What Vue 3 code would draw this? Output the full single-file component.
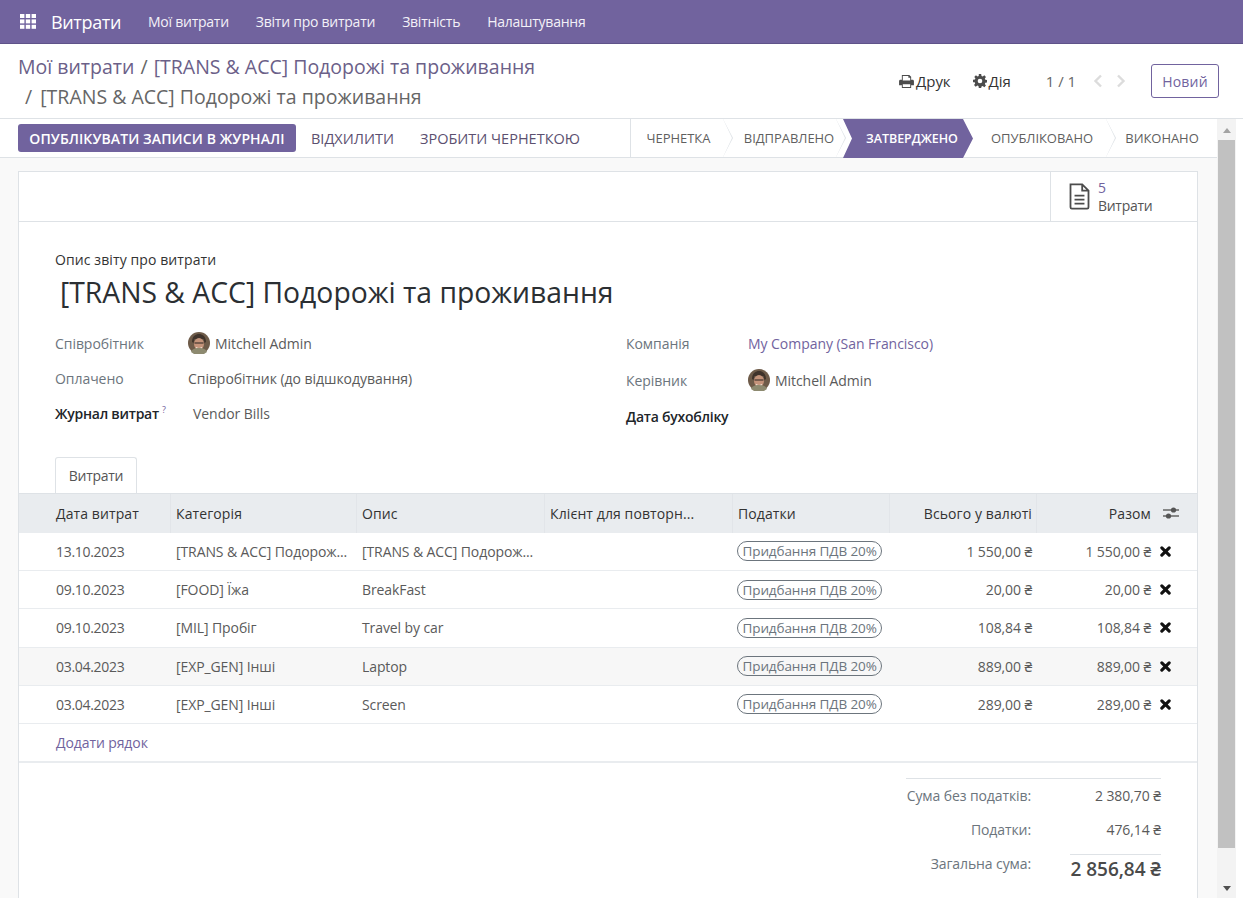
<template>
  <div class="app">
    <header class="navbar">
      <svg class="apps" viewBox="0 0 16 15" width="16" height="15">
        <g fill="#fff">
          <rect v-for="c in appCells" :key="c.k" :x="c.x" :y="c.y" width="4.4" height="4" />
        </g>
      </svg>
      <span class="brand">Витрати</span>
      <a v-for="m in menus" :key="m" class="menu">{{ m }}</a>
    </header>

    <div class="top">
      <div class="crumbs">
        <div class="crumb">Мої витрати <span class="sep">/</span> [TRANS &amp; ACC] Подорожі та проживання</div>
        <div class="crumb sub"><span class="sep">/</span> [TRANS &amp; ACC] Подорожі та проживання</div>
      </div>
      <div class="actions">
        <span class="act">
          <svg viewBox="0 0 16 14" width="15" height="13"><path fill="#4c4c4c" d="M3 0h8l2 2v3h1.500c.8 0 1.500.7 1.500 1.500V11h-3v3H3v-3H0V6.500C0 5.700.7 5 1.500 5H3zm1 1v5h8V3h-2V1zm0 9v3h8v-3z" fill-rule="evenodd"/></svg>Друк
        </span>
        <span class="act act2">
          <svg viewBox="0 0 24 24" width="14" height="14"><path fill="#4c4c4c" fill-rule="evenodd" d="M10 0h4l.6 3.300 2 .8L19.400 2.200l2.800 2.800-1.900 2.800.8 2 3.300.6v4l-3.300.6-.8 2 1.900 2.800-2.800 2.800-2.800-1.900-2 .8L14 24h-4l-.6-3.300-2-.8-2.800 1.900-2.800-2.800 1.900-2.800-.8-2L0 14v-4l3.300-.6.8-2L2.200 5 5 2.200l2.800 1.900 2-.8zM12 8a4 4 0 100 8 4 4 0 000-8z"/></svg>Дія
        </span>
        <span class="pager">1 / 1</span>
        <svg class="chev" viewBox="0 0 10 14" width="10" height="14"><path d="M8 1.500 2.500 7 8 12.500" fill="none" stroke="#dcdcdc" stroke-width="2.400"/></svg>
        <svg class="chev chev2" viewBox="0 0 10 14" width="10" height="14"><path d="M2 1.500 7.500 7 2 12.500" fill="none" stroke="#dcdcdc" stroke-width="2.400"/></svg>
        <button class="new">Новий</button>
      </div>
    </div>

    <div class="body">
      <div class="main">
        <div class="statusbar">
          <div class="btns">
            <button class="primary">ОПУБЛІКУВАТИ ЗАПИСИ В ЖУРНАЛІ</button>
            <button class="flat">ВІДХИЛИТИ</button>
            <button class="flat">ЗРОБИТИ ЧЕРНЕТКОЮ</button>
          </div>
          <div class="steps">
            <div v-for="s in steps" :key="s.t" class="step" :class="{ on: s.on, last: s.last }" :style="stepStyle(s)">{{ s.t }}</div>
          </div>
        </div>

        <div class="content">
          <div class="sheet">
            <div class="stat">
              <button class="statbtn">
                <svg viewBox="0 0 24 30" width="23" height="27"><path d="M2 1.500h13l7 7V27a1.500 1.500 0 0 1-1.500 1.500h-17A1.500 1.500 0 0 1 2 27z M15 1.500V8.500h7 M6.500 14h11 M6.500 18.500h11 M6.500 23h11" fill="none" stroke="#4c4c4c" stroke-width="2"/></svg>
                <span class="stattext"><b>5</b><i>Витрати</i></span>
              </button>
            </div>

            <div class="form">
              <label class="desc">Опис звіту про витрати</label>
              <h1 class="title">[TRANS &amp; ACC] Подорожі та проживання</h1>
              <div class="cols">
                <div class="col">
                  <div class="row r1"><span class="lab">Співробітник</span><span class="val"><span class="avatar"><svg viewBox="0 0 22 22"><use href="#face" /></svg></span>Mitchell Admin</span></div>
                  <div class="row r2"><span class="lab">Оплачено</span><span class="val">Співробітник (до відшкодування)</span></div>
                  <div class="row r2"><span class="lab strong">Журнал витрат<sup>?</sup></span><span class="val indent">Vendor Bills</span></div>
                </div>
                <div class="col right">
                  <div class="row r1"><span class="lab">Компанія</span><span class="val link">My Company (San Francisco)</span></div>
                  <div class="row r2b"><span class="lab">Керівник</span><span class="val"><span class="avatar"><svg viewBox="0 0 22 22"><use href="#face" /></svg></span>Mitchell Admin</span></div>
                  <div class="row r3b"><span class="lab strong">Дата бухобліку</span></div>
                </div>
              </div>
              <div class="tabs"><span class="tab">Витрати</span></div>
            </div>

            <table class="lines">
              <colgroup>
                <col style="width:152px" /><col style="width:186px" /><col style="width:188px" /><col style="width:188px" /><col style="width:157px" /><col style="width:147px" /><col style="width:119px" /><col />
              </colgroup>
              <thead>
                <tr>
                  <th class="first">Дата витрат</th>
                  <th>Категорія</th>
                  <th>Опис</th>
                  <th>Клієнт для повторн...</th>
                  <th>Податки</th>
                  <th class="num">Всього у валюті</th>
                  <th class="num plain">Разом</th>
                  <th class="opt">
                    <svg viewBox="0 0 16 14" width="16" height="14"><path d="M0 4h16M0 10h16" stroke="#666" stroke-width="1.300"/><circle cx="10.500" cy="4" r="2.600" fill="#555"/><circle cx="5.500" cy="10" r="2.600" fill="#555"/></svg>
                  </th>
                </tr>
              </thead>
              <tbody>
                <tr v-for="(l, i) in lines" :key="i" :class="{ hover: l.hover }">
                  <td class="first date">{{ l.date }}</td>
                  <td>{{ l.cat }}</td>
                  <td>{{ l.desc }}</td>
                  <td></td>
                  <td><span class="tax">Придбання ПДВ 20%</span></td>
                  <td class="num">{{ l.amount }}</td>
                  <td class="num">{{ l.amount }}</td>
                  <td class="del"><svg viewBox="0 0 12 12" width="11" height="11"><path d="M2 2l8 8M10 2l-8 8" stroke="#111" stroke-width="3.400" stroke-linecap="round"/></svg></td>
                </tr>
                <tr class="add"><td class="first" colspan="8"><a>Додати рядок</a></td></tr>
              </tbody>
            </table>

            <div class="totals">
              <div class="tline">
                <span class="tl">Сума без податків:</span><span class="tv">2 380,70 ₴</span>
              </div>
              <div class="tline">
                <span class="tl">Податки:</span><span class="tv">476,14 ₴</span>
              </div>
              <div class="tline grand">
                <span class="tl">Загальна сума:</span><span class="tv big">2 856,84 ₴</span>
              </div>
            </div>
          </div>
        </div>
      </div>

      <div class="scrollbar">
        <span class="tri up"></span>
        <span class="thumb"></span>
        <span class="tri down"></span>
      </div>
    </div>

    <svg width="0" height="0" class="defs">
      <symbol id="face" viewBox="0 0 22 22">
        <circle cx="11" cy="11" r="11" fill="#6e5b49"/>
        <path d="M4 10c0-6 4-8 7-8s7 2 7 8l-1.500 1-1-4H6.500l-1 4z" fill="#3f332b"/>
        <ellipse cx="11" cy="12" rx="5" ry="6" fill="#c4937a"/>
        <path d="M6.500 11h9" stroke="#3a2e28" stroke-width="1.100"/>
        <path d="M8 15.500c2 1.500 4 1.500 6 0" stroke="#f3e6dc" stroke-width="1.200" fill="none"/>
        <path d="M3 20c1-3 4-4 8-4s7 1 8 4l-3 2H6z" fill="#8d8a70"/>
      </symbol>
    </svg>
  </div>
</template>

<script setup>
const menus = ['Мої витрати', 'Звіти про витрати', 'Звітність', 'Налаштування']

const appCells = []
for (let r = 0; r < 3; r++) {
  for (let c = 0; c < 3; c++) {
    appCells.push({ k: r + '-' + c, x: c * 5.8, y: r * 5.4 })
  }
}

// shift: how far the label sits off the centre of its chevron cell
const steps = [
  { t: 'ЧЕРНЕТКА', w: 99, shift: -4 },
  { t: 'ВІДПРАВЛЕНО', w: 113, shift: 5 },
  { t: 'ЗАТВЕРДЖЕНО', w: 130, shift: 8, on: true },
  { t: 'ОПУБЛІКОВАНО', w: 140, shift: -2 },
  { t: 'ВИКОНАНО', w: 104, shift: -6, last: true },
]

const stepStyle = (s) => ({
  width: s.w + 'px',
  paddingLeft: Math.max(s.shift, 0) + 'px',
  paddingRight: Math.max(-s.shift, 0) + 'px',
})

const lines = [
  { date: '13.10.2023', cat: '[TRANS & ACC] Подорож...', desc: '[TRANS & ACC] Подорож...', amount: '1 550,00 ₴' },
  { date: '09.10.2023', cat: '[FOOD] Їжа', desc: 'BreakFast', amount: '20,00 ₴' },
  { date: '09.10.2023', cat: '[MIL] Пробіг', desc: 'Travel by car', amount: '108,84 ₴' },
  { date: '03.04.2023', cat: '[EXP_GEN] Інші', desc: 'Laptop', amount: '889,00 ₴', hover: true },
  { date: '03.04.2023', cat: '[EXP_GEN] Інші', desc: 'Screen', amount: '289,00 ₴' },
]
</script>

<style>
html, body { margin: 0; height: 100%; overflow: hidden; }
</style>

<style scoped>
.app {
  width: 1243px;
  height: 898px;
  display: flex;
  flex-direction: column;
  overflow: hidden;
  background: #fff;
  font-family: "Open Sans", "Noto Sans", sans-serif;
  font-size: 14px;
  color: #555;
  letter-spacing: -0.05px;
}
.defs { position: absolute; }

.navbar {
  height: 44px;
  box-sizing: border-box;
  flex: none;
  display: flex;
  align-items: center;
  background: #71639e;
  border-bottom: 1px solid #5f5389;
  color: #fff;
  padding-left: 20px;
}
.apps { margin-right: 15px; }
.brand { font-size: 18px; margin-right: 27px; letter-spacing: -0.35px; }
.menu { font-size: 14px; margin-right: 27px; color: #f3f1f8; letter-spacing: -0.25px; }

.top {
  height: 75px;
  flex: none;
  display: flex;
  justify-content: space-between;
  align-items: center;
  padding: 0 24px 0 18px;
  box-sizing: border-box;
  border-bottom: 1px solid #dee2e6;
}
.crumbs { padding-top: 2px; }
.crumb { font-size: 19.500px; line-height: 30px; color: #6b6088; letter-spacing: 0; }
.crumb .sep { color: #666; margin: 0 1px; }
.crumb.sub { color: #666; padding-left: 5px; }
.crumb.sub .sep { margin: 0 3px 0 2px; }
.actions { display: flex; align-items: center; }
.act { display: flex; align-items: center; gap: 2px; color: #333; font-size: 15px; }
.act2 { margin-left: 22px; }
.pager { margin-left: 35px; color: #666; font-size: 15px; }
.chev { margin-left: 17px; }
.chev2 { margin-left: 13px; }
.new {
  margin-left: 25px;
  width: 68px;
  height: 34px;
  background: #fff;
  border: 1px solid #71639e;
  border-radius: 3px;
  color: #71639e;
  font: inherit;
  font-weight: 500;
  letter-spacing: 0.2px;
}

.body { flex: 1; display: flex; min-height: 0; background: #fff; }
.main { width: 1217px; display: flex; flex-direction: column; flex: none; }
.scrollbar {
  width: 19px;
  background: #f3f3f3;
  display: flex;
  flex-direction: column;
  align-items: center;
}
.thumb { width: 17px; height: 708px; background: #c1c1c1; margin-top: 7px; flex: none; }
.tri { width: 0; height: 0; border-left: 4px solid transparent; border-right: 4px solid transparent; flex: none; }
.tri.up { border-bottom: 5px solid #a3a3a3; margin-top: 9px; }
.tri.down { border-top: 5px solid #505050; margin-top: 38px; }

.statusbar {
  height: 39px;
  box-sizing: border-box;
  flex: none;
  display: flex;
  justify-content: space-between;
  border-bottom: 1px solid #dee2e6;
  padding-left: 18px;
  width: 1217px;
}
.btns { display: flex; align-items: center; }
.primary {
  height: 28px;
  width: 278px;
  background: #71639e;
  color: #fff;
  border: 0;
  border-radius: 3px;
  font: inherit;
  font-weight: 600;
  letter-spacing: 0.1px;
  padding: 0;
}
.flat {
  border: 0;
  background: none;
  font: inherit;
  font-size: 14.500px;
  font-weight: 500;
  color: #5c5070;
  padding: 0;
  margin-left: 15px;
  margin-right: 11px;
  letter-spacing: 0;
}
.steps { display: flex; border-left: 1px solid #dee2e6; height: 38px; margin-left: -1px; }
.step {
  position: relative;
  display: flex;
  align-items: center;
  justify-content: center;
  font-size: 13px;
  color: #5f5f5f;
  box-sizing: border-box;
  flex: none;
  white-space: nowrap;
}
.step:not(.last):not(.on)::before {
  content: "";
  position: absolute;
  right: -3px;
  top: 0;
  width: 11px;
  height: 38px;
  background: #dee2e6;
  clip-path: polygon(0 0, 1px 0, 100% 50%, 1px 100%, 0 100%);
  z-index: 1;
}
.step:not(.last):not(.on)::after {
  content: "";
  position: absolute;
  right: -2px;
  top: 0;
  width: 10px;
  height: 38px;
  background: #fff;
  clip-path: polygon(0 0, 1px 0, 100% 50%, 1px 100%, 0 100%);
  z-index: 1;
}
.step.on {
  background: #71639e;
  color: #fff;
  font-size: 12.500px;
  font-weight: 600;
  height: 39px;
  z-index: 2;
  clip-path: polygon(0 0, calc(100% - 10px) 0, 100% 50%, calc(100% - 10px) 100%, 0 100%, 9px 50%);
}

.content {
  flex: 1;
  min-height: 0;
  display: flex;
  background: #f9f9f9;
  padding: 13px 19px 0 18px;
  overflow: hidden;
}
.sheet {
  background: #fff;
  border: 1px solid #dee2e6;
  border-bottom: 0;
  width: 1180px;
  box-sizing: border-box;
}
.stat {
  height: 50px;
  box-sizing: border-box;
  display: flex;
  justify-content: flex-end;
  border-bottom: 1px solid #dee2e6;
}
.statbtn {
  width: 147px;
  border: 0;
  border-left: 1px solid #dee2e6;
  background: none;
  display: flex;
  align-items: center;
  padding: 0 0 0 17px;
  gap: 7px;
  font: inherit;
  letter-spacing: -0.3px;
  color: #555;
}
.stattext { display: flex; flex-direction: column; align-items: flex-start; line-height: 18px; padding-top: 1px; }
.stattext b { font-weight: 400; color: #71639e; }
.stattext i { font-style: normal; }

.form { padding: 28px 36px 0 36px; }
.desc { display: block; font-weight: 500; color: #333; line-height: 19px; letter-spacing: 0.1px; }
.title {
  margin: 2px 0 0 5px;
  font-size: 28.300px;
  line-height: 42px;
  font-weight: 400;
  color: #2b2f33;
  letter-spacing: 0;
}
.cols { display: flex; margin-top: 19px; }
.col { width: 571px; flex: none; }
.row { display: flex; align-items: center; height: 22px; }
.r2 { margin-top: 13px; }
.r2b { margin-top: 15px; }
.r3b { margin-top: 14px; }
.lab { width: 133px; flex: none; color: #6c757d; }
.right .lab { width: 122px; }
.strong { color: #212529; font-weight: 600; letter-spacing: -0.25px; }
.strong sup { color: #71639e; font-size: 9px; font-weight: 400; margin-left: 3px; line-height: 0; }
.val { display: flex; align-items: center; color: #5a5a5a; }
.val.indent { margin-left: 5px; }
.link { color: #71639e; }
.avatar { width: 22px; height: 22px; margin-right: 5px; display: block; }
.avatar svg { display: block; width: 22px; height: 22px; }

.tabs {
  margin-top: 30px;
  height: 36px;
  display: flex;
  align-items: flex-end;
}
.tab {
  width: 82px;
  height: 36px;
  box-sizing: border-box;
  display: flex;
  align-items: center;
  justify-content: center;
  background: #fff;
  border: 1px solid #dee2e6;
  border-bottom: 0;
  border-radius: 3px 3px 0 0;
  color: #555;
  letter-spacing: -0.3px;
}

.lines {
  width: 100%;
  table-layout: fixed;
  border-collapse: collapse;
}
.lines th {
  height: 39px;
  box-sizing: border-box;
  padding: 0 5px;
  background: #e9ecef;
  border-top: 1px solid #dee2e6;
  font-weight: 500;
  text-align: left;
  color: #333;
  letter-spacing: 0.1px;
  box-shadow: inset -1px 0 0 #e2e5e9;
  white-space: nowrap;
  overflow: hidden;
}
.lines td {
  height: 38.200px;
  box-sizing: border-box;
  padding: 0 5px;
  border-bottom: 1px solid #e9ecef;
  white-space: nowrap;
  color: #5a5a5a;
  letter-spacing: -0.1px;
}
.lines th.first, .lines td.first { padding-left: 37px; }
.lines td.date { letter-spacing: -0.3px; }
.lines .num { text-align: right; }
.lines th.plain { box-shadow: none; }
.lines th.opt { padding: 0; box-shadow: none; }
.lines th.opt svg { display: block; margin-left: 7px; }
.lines td.del { padding: 0; }
.del svg { display: block; margin-left: 4px; }
.hover td { background: #f7f7f7; }
.tax {
  display: inline-block;
  border: 1px solid #6c757d;
  border-radius: 10px;
  font-size: 13.500px;
  line-height: 18px;
  padding: 0 4.500px;
  margin-left: -1px;
  color: #6c757d;
  letter-spacing: -0.1px;
}
.lines .add td { color: #71639e; border-bottom: 2px solid #e9ecef; }

.totals {
  width: 255px;
  margin: 15px 36px 0 auto;
  border-top: 1px solid #dee2e6;
}
.tline { display: flex; justify-content: flex-end; align-items: center; height: 34px; color: #6c757d; }
.tl { flex: none; white-space: nowrap; letter-spacing: -0.1px; }
.tline .tv { flex: none; width: 130px; text-align: right; color: #5a5a5a; }
.tline.grand { align-items: flex-start; padding-top: 7px; height: 50px; box-sizing: border-box; }
.tline.grand .tl { line-height: 16px; margin-top: 2px; }
.tline.grand .tv.big {
  width: 91px;
  margin-left: 39px;
  border-top: 1px solid #dee2e6;
  font-size: 19px;
  line-height: 28px;
  font-weight: 600;
  color: #4a4a4a;
  white-space: nowrap;
}
</style>
